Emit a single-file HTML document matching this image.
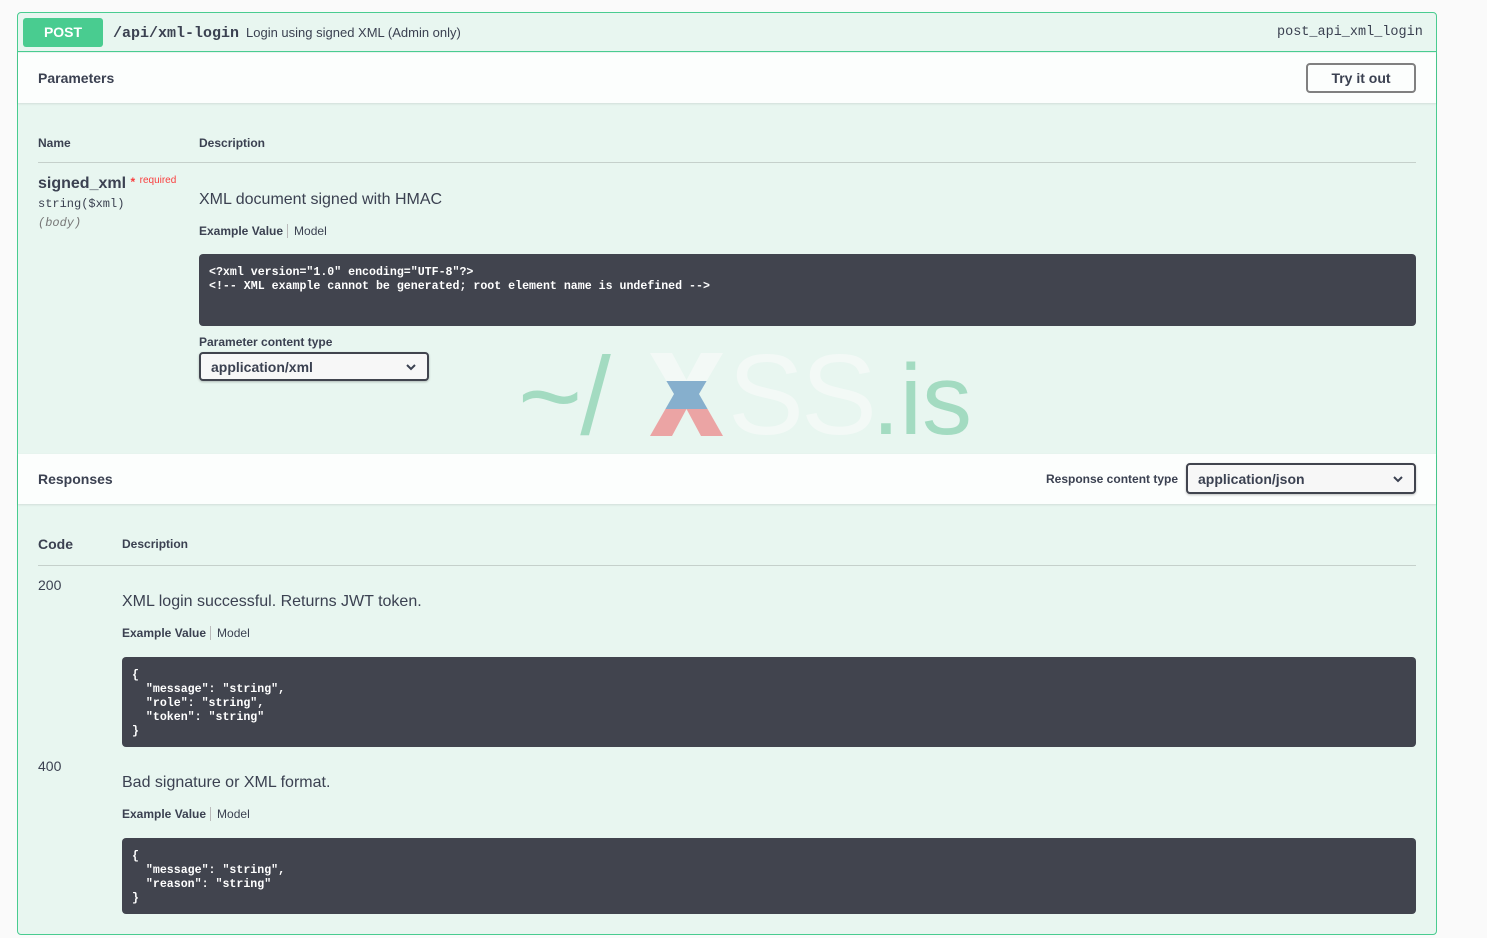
<!DOCTYPE html>
<html><head><meta charset="utf-8"><style>
*{box-sizing:border-box;margin:0;padding:0}
body{width:1487px;height:938px;background:#fafafa;font-family:"Liberation Sans",sans-serif;color:#3b4151;position:relative;overflow:hidden}
.a{position:absolute}
.card{left:17px;top:12px;width:1420px;height:923px;border:1px solid #49cc90;border-radius:4px;background:#e8f6f0}
.mono{font-family:"Liberation Mono",monospace}
.code{background:#41444e;border-radius:4px;color:#fff;font-family:"Liberation Mono",monospace;font-size:11.6px;font-weight:bold;line-height:14px;padding:12px 10px 10px;white-space:pre}
.sel{border:2px solid #41444e;border-radius:4px;background:#f7f7f7;font-weight:bold;font-size:14px;padding:0 10px;display:flex;align-items:center;justify-content:space-between;box-shadow:0 1px 2px rgba(0,0,0,.25)}
.ev{font-size:12px;font-weight:bold}
.ev span{font-weight:normal;border-left:1px solid #bbb;padding-left:6px;margin-left:4px}
</style></head><body>
<div class="a card"></div>
<div class="a" style="left:18px;top:13px;width:1418px;height:39px;border-bottom:1px solid #49cc90"></div>
<div class="a" style="left:23px;top:18px;width:80px;height:29px;background:#49cc90;border-radius:3px;color:#fff;font-weight:bold;font-size:14px;text-align:center;line-height:29px">POST</div>
<div class="a mono" style="left:113px;top:25px;font-size:15px;font-weight:bold">/api/xml-login</div>
<div class="a" style="left:246px;top:25px;font-size:13px">Login using signed XML (Admin only)</div>
<div class="a mono" style="left:1277px;top:25px;font-size:13.5px">post_api_xml_login</div>

<div class="a" style="left:18px;top:53px;width:1418px;height:50px;background:#fcfefd;box-shadow:0 1px 2px rgba(0,0,0,.1)"></div>
<div class="a" style="left:38px;top:70px;font-size:14px;font-weight:bold">Parameters</div>
<div class="a" style="left:1306px;top:63px;width:110px;height:30px;border:2px solid #808080;border-radius:4px;font-weight:bold;font-size:14px;text-align:center;line-height:26px">Try it out</div>

<div class="a" style="left:38px;top:136px;font-size:12px;font-weight:bold">Name</div>
<div class="a" style="left:199px;top:136px;font-size:12px;font-weight:bold">Description</div>
<div class="a" style="left:38px;top:162px;width:1378px;height:1px;background:#c5d0cb"></div>
<div class="a" style="left:38px;top:175px;font-size:16px;font-weight:bold">signed_xml <span style="color:#f93e3e;font-size:12px;vertical-align:top">*</span> <span style="color:#f93e3e;font-size:10px;font-weight:normal;vertical-align:top">required</span></div>
<div class="a mono" style="left:38px;top:197px;font-size:12px">string($xml)</div>
<div class="a mono" style="left:38px;top:216px;font-size:12px;font-style:italic;color:#777">(body)</div>
<div class="a" style="left:199px;top:191px;font-size:16px">XML document signed with HMAC</div>
<div class="a ev" style="left:199px;top:224px">Example Value<span>Model</span></div>
<div class="a code" style="left:199px;top:254px;width:1217px;height:72px">&lt;?xml version="1.0" encoding="UTF-8"?&gt;
&lt;!-- XML example cannot be generated; root element name is undefined --&gt;</div>
<div class="a" style="left:199px;top:335px;font-size:12px;font-weight:bold">Parameter content type</div>
<div class="a sel" style="left:199px;top:352px;width:230px;height:29px">application/xml<svg width="12" height="8" viewBox="0 0 12 8"><path d="M2 2l4 4 4-4" fill="none" stroke="#3b4151" stroke-width="2"/></svg></div>

<!-- watermark -->
<div class="a" style="left:518px;top:337px;font-size:110px;color:#a3dbc1;line-height:120px;letter-spacing:-2px">~/</div>
<svg class="a" style="left:650px;top:353px" width="73" height="83" viewBox="0 0 73 83">
<defs><clipPath id="x"><polygon points="0,0 22,0 36.5,27 51,0 73,0 49,41 73,83 51,83 36.5,56 22,83 0,83 24,41"/></clipPath></defs>
<g clip-path="url(#x)"><rect x="0" y="0" width="73" height="28" fill="#f3f9f6"/><rect x="0" y="28" width="73" height="28" fill="#86afcd"/><rect x="0" y="56" width="73" height="27" fill="#eba4a4"/></g>
</svg>
<div class="a" style="left:728px;top:336px;font-size:114px;color:#f3f9f6;line-height:120px;letter-spacing:-3px">SS</div>
<div class="a" style="left:872px;top:345px;font-size:100px;color:#a3dbc1;line-height:110px">.is</div>

<div class="a" style="left:18px;top:454px;width:1418px;height:50px;background:#fcfefd;box-shadow:0 1px 2px rgba(0,0,0,.1)"></div>
<div class="a" style="left:38px;top:471px;font-size:14px;font-weight:bold">Responses</div>
<div class="a" style="left:1046px;top:472px;font-size:12px;font-weight:bold">Response content type</div>
<div class="a sel" style="left:1186px;top:463px;width:230px;height:31px">application/json<svg width="12" height="8" viewBox="0 0 12 8"><path d="M2 2l4 4 4-4" fill="none" stroke="#3b4151" stroke-width="2"/></svg></div>

<div class="a" style="left:38px;top:536px;font-size:14px;font-weight:bold">Code</div>
<div class="a" style="left:122px;top:537px;font-size:12px;font-weight:bold">Description</div>
<div class="a" style="left:38px;top:565px;width:1378px;height:1px;background:#c5d0cb"></div>

<div class="a" style="left:38px;top:577px;font-size:14px">200</div>
<div class="a" style="left:122px;top:593px;font-size:16px">XML login successful. Returns JWT token.</div>
<div class="a ev" style="left:122px;top:626px">Example Value<span>Model</span></div>
<div class="a code" style="left:122px;top:657px;width:1294px;height:90px">{
  "message": "string",
  "role": "string",
  "token": "string"
}</div>

<div class="a" style="left:38px;top:758px;font-size:14px">400</div>
<div class="a" style="left:122px;top:774px;font-size:16px">Bad signature or XML format.</div>
<div class="a ev" style="left:122px;top:807px">Example Value<span>Model</span></div>
<div class="a code" style="left:122px;top:838px;width:1294px;height:76px">{
  "message": "string",
  "reason": "string"
}</div>
</body></html>
